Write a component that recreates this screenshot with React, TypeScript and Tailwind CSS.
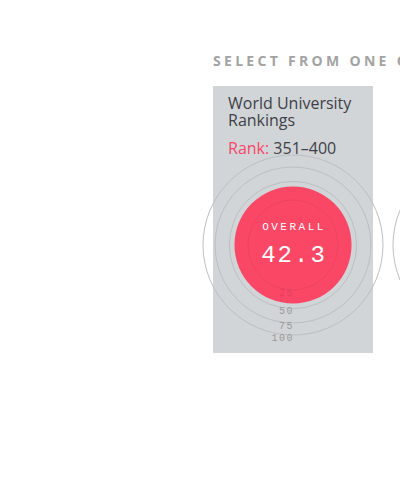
import React from "react";

const CX = 90;
const CY = 90;
const R = 90;

function Chart({ value }: { value: number }) {
  const rings = [25, 50, 75, 100];
  const rv = Math.sqrt(value / 100) * R;
  return (
    <svg width={180} height={200} viewBox="0 0 180 200" className="block overflow-visible shrink-0">
      {rings.slice(1).map((r) => (
        <circle key={r} cx={CX} cy={CY} r={Math.sqrt(r / 100) * R} fill="none" stroke="#bcbfc2" strokeWidth={1} />
      ))}
      <circle cx={CX} cy={CY} r={rv} fill="#fa4766" />
      <circle cx={CX} cy={CY} r={Math.sqrt(0.25) * R} fill="none" stroke="#e23f5c" strokeWidth={1} opacity={0.6} />
      {rings.map((r) => {
        const rr = Math.sqrt(r / 100) * R;
        return (
          <text
            key={r}
            x={CX + 1}
            y={CY + rr + 3}
            textAnchor="end"
            dominantBaseline="middle"
            fontFamily="'Liberation Mono', 'Courier New', monospace"
            fontSize={10}
            letterSpacing={1.5}
            fill={r === 25 ? "#e4405f" : "#9a9a9a"}
          >
            {r}
          </text>
        );
      })}
      <text
        x={CX + 1}
        y={CY - 18}
        textAnchor="middle"
        dominantBaseline="middle"
        fontFamily="'Liberation Mono', 'Courier New', monospace"
        fontSize={11}
        letterSpacing={2.5}
        fill="#ffffff"
      >
        OVERALL
      </text>
      <text
        x={CX + 1}
        y={CY + 11}
        textAnchor="middle"
        dominantBaseline="middle"
        fontFamily="'Liberation Mono', 'Courier New', monospace"
        fontSize={24}
        letterSpacing={2}
        fill="#ffffff"
      >
        {value.toFixed(1)}
      </text>
    </svg>
  );
}

function Card({ value }: { value: number }) {
  return (
    <div className="w-[160px] h-[267px] shrink-0 bg-[#d1d5d8] pt-[9px] px-[15px]">
      <div className="text-[16px] leading-[17px] text-[#3f3f46]" style={{ fontFamily: "'Open Sans', sans-serif" }}>
        World University Rankings
      </div>
      <div className="mt-[9px] text-[16px] leading-[20px] text-[#3f3f46]" style={{ fontFamily: "'Open Sans', sans-serif" }}>
        <span className="text-[#f9466a]">Rank:</span> 351–400
      </div>
      <div className="-mt-[3px] -mx-[25px]">
        <Chart value={value} />
      </div>
    </div>
  );
}

export default function App() {
  return (
    <div className="w-[400px] h-[482px] overflow-hidden bg-white" style={{ fontFamily: "'Open Sans', sans-serif" }}>
      <div className="pl-[213px] pt-[52px]">
        <div className="whitespace-nowrap text-[14px] leading-[18px] font-bold tracking-[3.3px] text-[#a3a3a3]">
          SELECT FROM ONE OF THE RANKINGS
        </div>
        <div className="mt-[16px] flex gap-[30px]">
          <Card value={42.3} />
          <Card value={42.3} />
        </div>
      </div>
    </div>
  );
}
